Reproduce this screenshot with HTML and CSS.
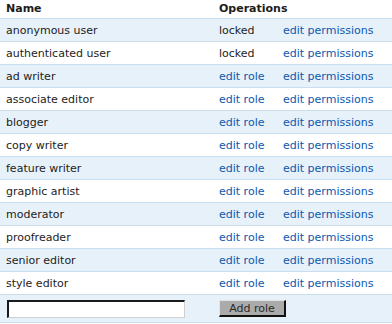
FILE: index.html
```html
<!DOCTYPE html>
<html>
<head>
<meta charset="utf-8">
<link rel="stylesheet" href="styles.css">
</head>
<body>
<table class="roles">
  <colgroup>
    <col class="c-name">
    <col class="c-op1">
    <col class="c-op2">
  </colgroup>
  <thead>
    <tr><th>Name</th><th colspan="2">Operations</th></tr>
  </thead>
  <tbody>
    <tr class="odd"><td>anonymous user</td><td>locked</td><td><a href="#">edit permissions</a></td></tr>
    <tr class="even"><td>authenticated user</td><td>locked</td><td><a href="#">edit permissions</a></td></tr>
    <tr class="odd"><td>ad writer</td><td><a href="#">edit role</a></td><td><a href="#">edit permissions</a></td></tr>
    <tr class="even"><td>associate editor</td><td><a href="#">edit role</a></td><td><a href="#">edit permissions</a></td></tr>
    <tr class="odd"><td>blogger</td><td><a href="#">edit role</a></td><td><a href="#">edit permissions</a></td></tr>
    <tr class="even"><td>copy writer</td><td><a href="#">edit role</a></td><td><a href="#">edit permissions</a></td></tr>
    <tr class="odd"><td>feature writer</td><td><a href="#">edit role</a></td><td><a href="#">edit permissions</a></td></tr>
    <tr class="even"><td>graphic artist</td><td><a href="#">edit role</a></td><td><a href="#">edit permissions</a></td></tr>
    <tr class="odd"><td>moderator</td><td><a href="#">edit role</a></td><td><a href="#">edit permissions</a></td></tr>
    <tr class="even"><td>proofreader</td><td><a href="#">edit role</a></td><td><a href="#">edit permissions</a></td></tr>
    <tr class="odd"><td>senior editor</td><td><a href="#">edit role</a></td><td><a href="#">edit permissions</a></td></tr>
    <tr class="even"><td>style editor</td><td><a href="#">edit role</a></td><td><a href="#">edit permissions</a></td></tr>
    <tr class="odd add"><td><input type="text" class="name-input"></td><td colspan="2"><button type="button" class="add-btn">Add role</button></td></tr>
  </tbody>
</table>
</body>
</html>
```

FILE: styles.css
```css
html, body {
  margin: 0;
  padding: 0;
  background: #fff;
}
body {
  font-family: "DejaVu Sans", Verdana, sans-serif;
  font-size: 11px;
  color: #1c1c1c;
}
.roles {
  width: 392px;
  border-collapse: collapse;
  table-layout: fixed;
}
.c-name { width: 213px; }
.c-op1 { width: 64px; }
.c-op2 { width: 115px; }
.roles th {
  text-align: left;
  font-weight: bold;
  color: #1c1c1c;
  line-height: 14px;
  padding: 2px 6px 2px;
  border-bottom: 1px solid #c8ddee;
}
.roles td {
  line-height: 14px;
  padding: 5px 6px 3px;
  white-space: nowrap;
  vertical-align: middle;
}
.roles tbody tr {
  border-bottom: 1px solid #c8ddee;
}
.roles tr.odd { background: #e7f1f9; }
.roles tr.even { background: #fff; }
.roles a {
  color: #0a58b0;
  text-decoration: none;
}
.roles tr.add td {
  height: 17px;
  padding-top: 4px;
  padding-bottom: 4px;
}
.name-input {
  box-sizing: border-box;
  width: 178px;
  height: 18px;
  margin: 1px 0 0 1px;
  padding: 0 2px;
  background: #fff;
  border-style: solid;
  border-width: 2px 1px 1px 2px;
  border-color: #1a1a1a #cfcfcf #cfcfcf #1a1a1a;
  font: 11px "DejaVu Sans", Verdana, sans-serif;
  display: block;
}
.add-btn {
  box-sizing: border-box;
  width: 67px;
  height: 17px;
  margin: 0;
  padding: 0;
  background: #ababab;
  color: #2a2a2a;
  border-style: solid;
  border-width: 1px 2px 2px 1px;
  border-color: #e2e2e2 #111 #111 #e2e2e2;
  font: 11px "DejaVu Sans", Verdana, sans-serif;
  line-height: 13px;
  display: block;
}
```
